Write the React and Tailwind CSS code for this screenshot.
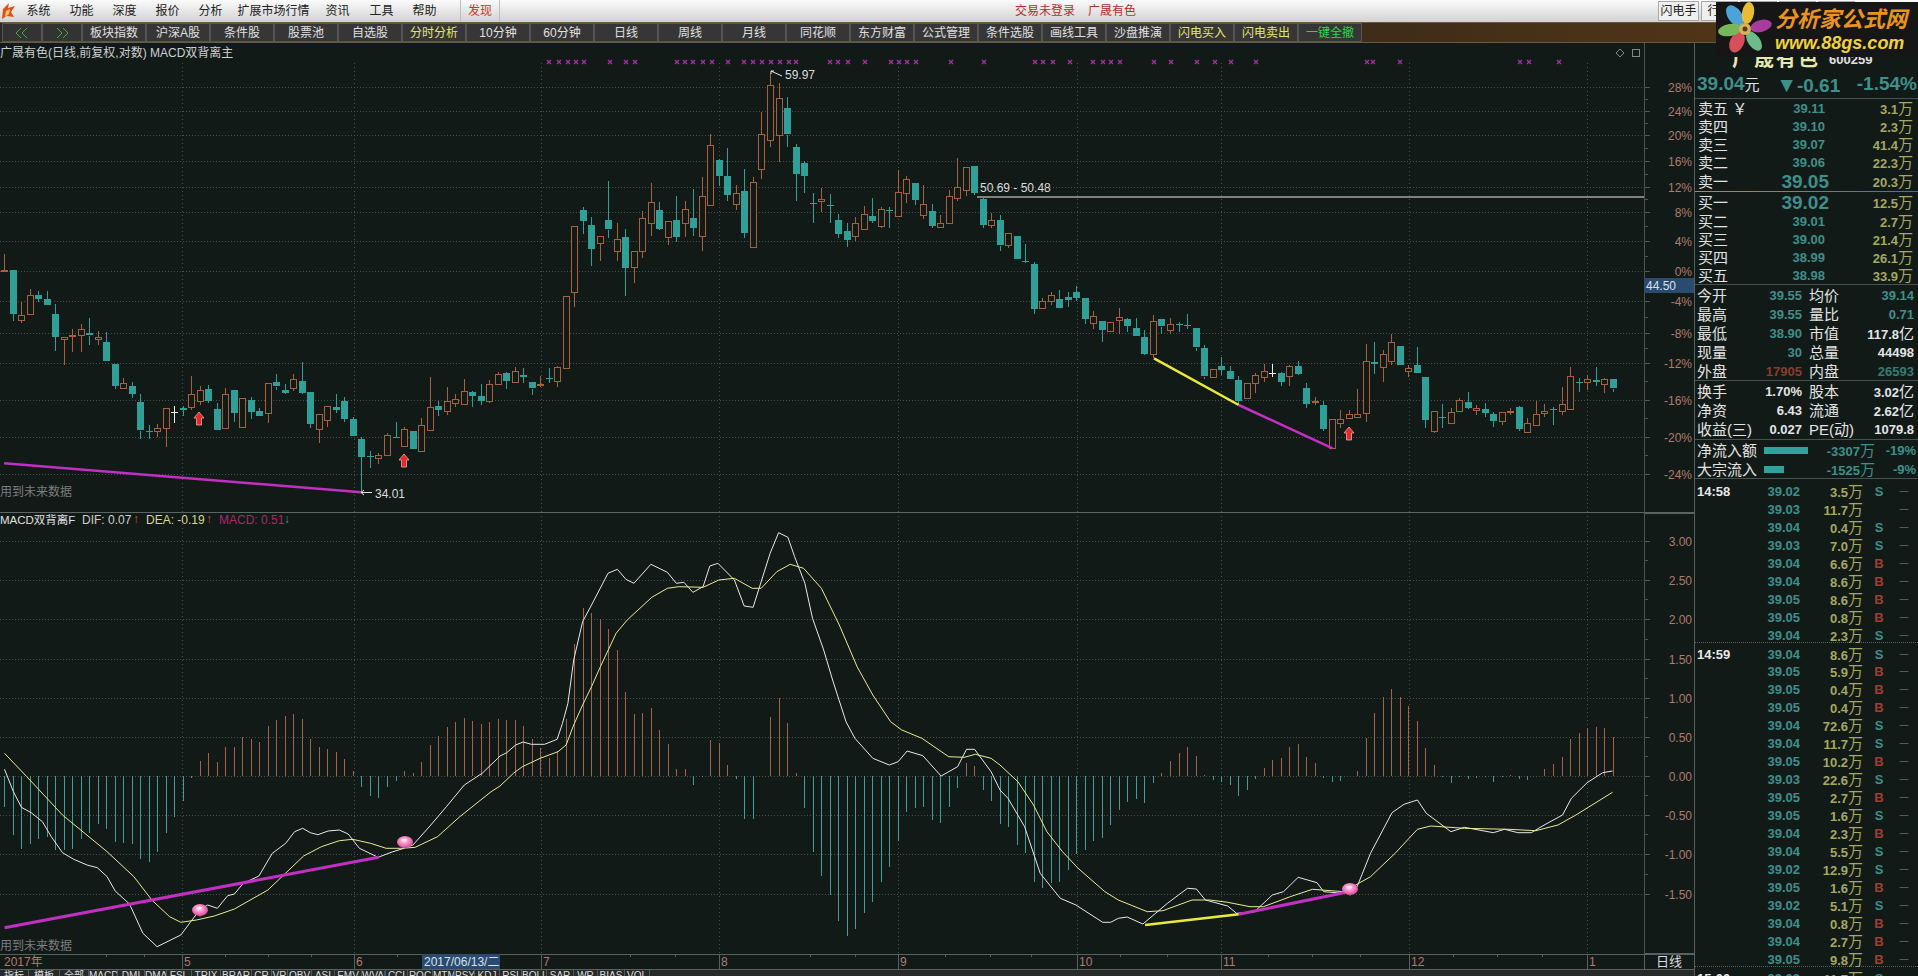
const BG = '#121a18';
const RED = '#a9603f';
const TEAL = '#2f9f98';

// candle data read off the chart: [kind, high, bodyTop, bodyBottom, low], kind 0 up, 1 down, 2 white doji
const candlesA = [
  [0,42,90,94,94],[1,90,90,222,242],[0,185,224,240,248],[0,148,166,224,224],[1,154,166,178,185],[1,153,178,195,195],[1,192,222,290,332],[0,290,290,295,376],[0,268,286,290,335],[0,252,268,286,335],
  [1,235,280,287,315],[0,272,290,297,316],[1,277,306,363,363],[1,372,372,438,448],[0,415,430,445,445],[1,425,438,462,475],[1,462,487,572,596],[1,556,573,575,598],[0,552,565,575,590],[0,505,505,565,622],
  [2,497,517,519,548],[1,497,503,509,528],[0,408,463,502,510],[0,437,451,485,495],[1,436,447,483,490],[1,490,508,572,572],[0,445,463,566,566],[1,450,450,518,545],[0,475,475,562,562],[1,472,480,515,538],
  [1,505,514,530,532],[0,430,430,520,548],[1,402,427,440,450],[1,433,451,459,463],[0,403,418,446,452],[1,367,424,460,462],[1,457,457,552,565],[0,523,523,569,608],[0,499,499,541,560],[1,463,502,511,518],
  [1,472,483,537,545],[1,532,538,588,588],[1,590,597,650,760],[1,634,648,650,684],[0,640,644,653,672],[0,578,586,646,646],[1,546,592,596,596],[0,560,568,620,620],[1,574,574,627,627],[0,533,556,635,635],
  [0,411,500,569,569],[1,484,498,510,528],[0,441,484,513,524],[0,463,478,490,500],[0,418,454,494,494],[1,452,456,468,500],[1,433,468,482,495],[0,420,433,483,490],[0,395,403,433,434],[1,395,399,423,446],
  [0,382,392,425,428],[1,384,404,410,428],[1,427,427,446,464],[0,407,431,435,442],[1,385,415,417,428],[0,378,382,425,442],[0,169,169,386,386],
];
const candlesB = [
  [0,528,528,727,770],[1,470,480,512,552],[1,502,525,597,647],[0,559,559,581,632],[1,393,511,539,565],[0,520,566,602,632],[1,538,561,653,738],[0,603,603,650,698],[0,484,504,604,625],[0,400,457,520,557],
  [1,457,480,537,541],[0,514,514,563,585],[1,438,510,561,575],[0,453,478,520,562],[1,417,504,533,557],[0,380,438,559,602],[0,253,286,467,467],[1,328,330,377,408],[1,295,378,434,452],[0,405,428,460,480],
  [1,358,423,548,563],[0,380,397,592,592],[0,185,253,358,386],[0,70,106,271,290],[0,100,145,255,337],[1,142,175,254,290],[1,282,292,372,452],[1,332,339,377,428],[1,430,459,461,518],[0,415,448,455,487],
  [1,432,466,469,518],[1,492,511,552,565],[1,520,544,570,592],[0,500,520,560,572],[0,467,492,536,536],[1,444,499,513,518],[0,472,478,530,534],[1,472,481,484,534],[0,360,427,500,500],[0,378,388,430,458],
  [1,400,400,450,466],[0,405,463,495,508],[1,462,484,528,534],[0,495,520,532,532],[0,420,438,518,518],[0,325,412,445,452],[0,352,352,420,438],[1,349,349,430,436],[1,440,447,525,534],[0,490,511,527,535],
  [1,495,511,587,603],[0,548,550,587,594],[1,558,558,627,627],[1,582,634,637,640],[1,636,642,776,792],
];
const candlesC = [
  [0,175,182,203,205],[0,155,165,182,195],[1,150,178,204,205],[1,155,170,179,200],[1,138,157,174,184],[1,174,174,237,252],[0,213,229,250,266],[1,243,243,270,305],[0,245,245,272,272],[0,205,232,242,282],
  [1,235,238,258,275],[1,235,265,290,290],[1,270,291,342,345],[0,225,243,342,355],[1,238,238,260,283],[0,235,253,272,282],[1,245,251,254,275],[1,223,256,258,268],[1,265,265,323,332],[1,315,325,410,418],
  [0,388,388,412,414],[1,350,378,389,405],[1,378,393,416,418],[1,408,420,482,495],[0,430,430,476,476],[0,400,405,428,460],[0,372,394,411,425],[2,372,399,401,410],[1,395,400,426,438],[0,375,379,408,438],
  [1,362,377,402,405],[1,430,445,492,505],[0,472,484,488,495],[1,482,496,568,572],[0,538,538,625,625],[0,510,536,547,565],[0,510,523,536,538],[0,448,521,530,530],[0,312,362,518,545],[1,305,366,372,402],
  [0,330,343,382,425],[0,283,305,362,375],[1,319,319,376,376],[0,375,385,393,410],[1,322,376,399,399],[1,412,412,540,565],[0,514,514,575,580],[1,492,531,534,565],[0,503,517,549,550],[0,475,481,514,516],
  [1,457,487,504,507],[0,495,503,510,525],[1,488,508,519,530],[1,515,521,543,560],[0,515,515,543,555],[0,505,514,516,525],[1,498,502,567,572],[0,535,550,578,580],[0,483,523,555,555],[0,492,514,521,530],
  [1,500,507,509,555],[0,440,493,513,526],[0,382,409,509,509],[1,415,427,430,456],[0,405,418,428,450],[1,380,419,425,438],[0,415,416,430,458],[1,418,418,446,456],
];
const candles = [
  ...candlesA.map((c) => [c[0], ...c.slice(1).map((z) => 240 + z / 3)]),
  ...candlesB.map((c) => [c[0], ...c.slice(1).map((z) => 50 + z / 3)]),
  ...candlesC.map((c) => [c[0], ...c.slice(1).map((z) => 240 + z / 3)]),
];

// macd histogram, px above or below the zero line
const hist = [
  -31,-59,-73,-68,-63,-61,-74,-74,-73,-63,-57,-48,-53,-66,-67,-68,-83,-86,-76,-57,-41,-25,-2,
  15,23,14,29,29,39,37,34,50,56,60,62,57,37,29,27,24,17,5,-11,-20,-22,-11,-5,
  5,3,14,31,40,49,54,58,55,52,54,57,56,56,50,37,28,18,25,57,132,168,163,157,147,126,84,62,63,68,46,32,7,7,
  -9,-1,36,33,11,-3,-43,-43,0,59,78,53,3,
  -32,-76,-100,-119,-145,-160,-153,-137,-126,-106,-91,-65,-36,-32,-31,-44,-47,-31,-12,13,10,
  -14,-25,-48,-51,-69,-77,-106,-112,-107,-106,-94,-78,-74,-65,-62,-49,-34,-26,-23,-27,-7,
  3,15,23,29,20,1,-4,-6,-9,-20,-14,-3,8,16,18,29,32,19,13,-2,-6,-5,0,5,38,
  63,79,87,79,70,55,28,11,-1,-7,-1,-3,-2,-1,-6,-1,1,-3,-4,0,7,12,19,37,43,48,49,48,39,
];

const pts = (list, x0, sx, y0) => list.map(([x, y]) => `${(x0 + x / sx).toFixed(1)},${(y0 + y / 3).toFixed(1)}`).join(' ');

const difLine = [
  pts([[10,148],[30,215],[48,262],[70,278],[95,305],[115,350],[140,398],[165,418],[195,435],[218,443],[240,470],[258,513],[290,552],[320,640],[352,680],[405,645],[430,600],[447,570],[465,555],[487,565],[510,527],[525,522],[545,490],[580,468],[610,400],[640,370],[660,335],[678,325],[695,338],[712,344],[735,333],[760,330],[780,342],[805,385],[847,412],[880,395],[905,385],[925,375],[945,345],[965,315],[1000,260],[1040,195],[1080,160],[1115,115]], 0, 2.24, 720),
  pts([[0,738],[15,728],[35,705],[52,696],[70,703],[100,703],[128,688],[140,640],[152,580],[165,450],[185,335],[205,285],[242,190],[263,178],[282,208],[300,220],[338,163],[375,187],[395,220],[412,217],[432,247],[455,230],[470,168],[488,160],[525,210],[547,288],[567,292],[605,130],[624,68],[645,82],[660,140],[683,220],[700,325],[725,420],[745,510],[775,635],[795,685],[835,745],[872,765],[892,755],[912,723],[947,737],[988,798],[1025,770],[1045,718],[1063,718],[1100,785]], 500, 2.24, 510),
  pts([[0,210],[18,235],[55,320],[90,460],[135,535],[170,555],[230,607],[248,607],[265,595],[285,591],[320,612],[375,550],[420,505],[440,507],[460,540],[510,558],[530,580],[570,575],[610,525],[635,515],[668,472],[710,488],[725,515],[770,520],[785,505],[800,500],[830,400],[878,278],[905,253],[935,240],[955,280],[1010,335],[1040,322],[1105,338],[1130,328],[1160,338],[1190,338],[1215,318],[1260,285],[1280,235],[1315,188],[1350,158],[1372,153]], 1000, 2.24, 720),
].join(' ');

const deaLine = [
  pts([[10,100],[60,170],[140,285],[240,395],[300,470],[340,540],[380,590],[405,607],[440,600],[480,588],[525,567],[600,510],[680,408],[720,380],[760,362],[790,358],[830,370],[865,385],[900,385],[930,382],[980,350],[1030,290],[1100,215]], 0, 2.24, 720),
  pts([[0,828],[30,790],[50,770],[90,745],[130,725],[148,705],[165,645],[185,585],[205,530],[225,470],[260,370],[285,330],[340,262],[375,235],[400,230],[455,232],[490,210],[525,205],[565,235],[585,235],[620,185],[650,163],[680,175],[720,235],[760,345],[800,470],[835,555],[875,635],[900,660],[945,685],[1005,740],[1040,742],[1065,733],[1100,745]], 500, 2.24, 510),
  pts([[0,135],[40,185],[75,255],[105,335],[140,395],[175,445],[235,515],[265,540],[330,575],[365,572],[430,540],[470,540],[510,547],[560,560],[590,560],[650,530],[700,508],[770,515],[830,470],[885,400],[935,328],[965,318],[1040,325],[1140,328],[1200,332],[1250,315],[1290,285],[1372,217]], 1000, 2.24, 720),
].join(' ');

const monthX = [182, 354, 541, 719, 898, 1077, 1221, 1409, 1587];
const upperGrid = [[87,'28%'],[111,'24%'],[135,'20%'],[161,'16%'],[187,'12%'],[212,'8%'],[241,'4%'],[271,'0%'],[301,'-4%'],[333,'-8%'],[363,'-12%'],[400,'-16%'],[437,'-20%'],[474,'-24%']];
const lowerGrid = [[541,'3.00'],[580,'2.50'],[619,'2.00'],[659,'1.50'],[698,'1.00'],[737,'0.50'],[776,'0.00'],[815,'-0.50'],[854,'-1.00'],[894,'-1.50']];
const crossX = [549,559,568,576,584,610,626,635,677,685,693,703,712,728,744,753,762,771,780,789,796,830,838,848,865,891,899,907,916,951,984,1035,1043,1053,1070,1093,1103,1111,1120,1154,1171,1197,1215,1231,1256,1367,1373,1400,1520,1529,1559];

const candleX = (i) => Math.round(4 + 8.511 * i) + 0.5;

const Candle = ({ c, i }) => {
  const [kind, high, top, bottom, low] = c;
  const x = candleX(i);
  const color = kind === 0 ? RED : kind === 1 ? TEAL : '#eeeeee';
  return (
    <g shapeRendering="crispEdges">
      <line x1={x} x2={x} y1={high} y2={top} stroke={color} />
      <line x1={x} x2={x} y1={bottom} y2={low} stroke={color} />
      {kind === 0 ? (
        <rect x={x - 3} y={Math.round(top) + 0.5} width={6} height={Math.max(1, Math.round(bottom - top))} fill={BG} stroke={color} />
      ) : (
        <rect x={x - 3.5} y={Math.round(top)} width={7} height={Math.max(1, Math.round(bottom - top))} fill={color} />
      )}
    </g>
  );
};

const UpArrow = ({ x, y }) => (
  <path transform={`translate(${x} ${y})`} d="M0,-7 L5,-1 L2.5,-1 L2.5,6 L-2.5,6 L-2.5,-1 L-5,-1 Z" fill="#e02b2b" stroke="#f0a79d" strokeWidth="0.8" />
);

const Gem = ({ x, y }) => (
  <g transform={`translate(${x} ${y})`}>
    <path d="M-6,1 L0,7 L6,1 Z" fill="#c9407f" />
    <ellipse rx="8" ry="6" fill="url(#gem)" />
    <ellipse cx="-1" cy="-2" rx="3" ry="1.5" fill="#fff0f8" opacity="0.7" />
  </g>
);

const Axis = ({ grid, y1, y2 }) => (
  <g>
    <line x1="1644" x2="1644" y1={y1} y2={y2} stroke="#4a5653" shapeRendering="crispEdges" />
    {grid.map(([y, label], i) => (
      <g key={label}>
        <line x1="1644" x2="1650" y1={y} y2={y} stroke="#4a5653" shapeRendering="crispEdges" />
        {i < grid.length - 1 && (
          <line x1="1644" x2="1648" y1={(y + grid[i + 1][0]) / 2} y2={(y + grid[i + 1][0]) / 2} stroke="#4a5653" shapeRendering="crispEdges" />
        )}
        <text x="1692" y={y + 2} textAnchor="end" dominantBaseline="middle" fontSize="12" fill="#b07a6c">{label}</text>
      </g>
    ))}
  </g>
);

const Grid = ({ grid, y1, y2 }) => (
  <g stroke="#46514e" shapeRendering="crispEdges">
    {grid.map(([y]) => (
      <line key={y} x1="0" x2="1644" y1={y + 0.5} y2={y + 0.5} strokeDasharray="1 2" />
    ))}
    {monthX.map((x) => (
      <line key={x} x1={x + 0.5} x2={x + 0.5} y1={y1} y2={y2} strokeDasharray="1 3" />
    ))}
  </g>
);

const UpperChart = () => (
  <svg width="1694" height="469" viewBox="0 43 1694 469">
    <Grid grid={upperGrid} y1={63} y2={512} />
    <text x="0" y="54" dominantBaseline="middle" fontSize="12" fill="#cfcfcf">广晟有色(日线,前复权,对数) MACD双背离主</text>
    <g fill="none" stroke="#7d8a86">
      <path d="M1620,49 L1624,53 L1620,57 L1616,53 Z" />
      <rect x="1632.5" y="49.5" width="7" height="7" />
    </g>
    <g stroke="#a32ea3" strokeWidth="1.4">
      {crossX.map((x) => (
        <path key={x} d={`M${x - 2},60 L${x + 2},64 M${x + 2},60 L${x - 2},64`} />
      ))}
    </g>
    <line x1="977" x2="1644" y1="197" y2="197" stroke="#a6a69a" strokeWidth="1.6" />
    {candles.map((c, i) => <Candle key={i} c={c} i={i} />)}
    <polyline points={pts([[10,670],[885,757]], 0, 2.45, 240)} stroke="#c22fc2" strokeWidth="2.5" fill="none" />
    <polyline points={pts([[345,355],[535,495]], 1000, 2.24, 240)} stroke="#eaea3c" strokeWidth="2.5" fill="none" />
    <polyline points={pts([[535,495],[745,625]], 1000, 2.24, 240)} stroke="#c22fc2" strokeWidth="2.5" fill="none" />
    <UpArrow x={199} y={419} />
    <UpArrow x={404} y={461} />
    <UpArrow x={1349} y={434} />
    <g stroke="#e6e6e6" fill="none">
      <path d="M771,74 L771,71 L774,71 M771,71 L782,76" />
      <path d="M361,492.5 L372,492.5 M361,492.5 L364,490 M361,492.5 L364,495" />
    </g>
    <g fontSize="12" fill="#dcdcdc" dominantBaseline="middle">
      <text x="785" y="76">59.97</text>
      <text x="375" y="495">34.01</text>
      <text x="980" y="189">50.69 - 50.48</text>
    </g>
    <text x="0" y="493" dominantBaseline="middle" fontSize="12" fill="#7d7d7d">用到未来数据</text>
    <Axis grid={upperGrid} y1={43} y2={512} />
    <rect x="1644" y="278" width="50" height="15" fill="#2a4a70" />
    <text x="1646" y="286.5" dominantBaseline="middle" fontSize="12" fill="#d8e2ea">44.50</text>
  </svg>
);

const LowerChart = () => (
  <svg width="1694" height="441" viewBox="0 513 1694 441">
    <defs>
      <radialGradient id="gem" cx="45%" cy="40%" r="60%">
        <stop offset="0%" stopColor="#fbd4ea" />
        <stop offset="60%" stopColor="#f07cbc" />
        <stop offset="100%" stopColor="#d64596" />
      </radialGradient>
    </defs>
    <Grid grid={lowerGrid} y1={516} y2={954} />
    <g fontSize="12" dominantBaseline="middle">
      <text x="0" y="521" fill="#e0e0e0" fontSize="11.5">MACD双背离F</text>
      <text x="82" y="521" fill="#cfcfcf">DIF: 0.07</text>
      <text x="133" y="520" fill="#b5603f">↑</text>
      <text x="146" y="521" fill="#d9d98a">DEA: -0.19</text>
      <text x="206" y="520" fill="#b5603f">↑</text>
      <text x="219" y="521" fill="#a82a66">MACD: 0.51</text>
      <text x="284" y="520" fill={TEAL}>↓</text>
    </g>
    <g shapeRendering="crispEdges">
      {hist.map((h, i) => (
        <line key={i} x1={candleX(i)} x2={candleX(i)} y1={776} y2={776 - h} stroke={h > 0 ? '#a8604a' : '#3f9d97'} />
      ))}
    </g>
    <polyline points={difLine} fill="none" stroke="#e8e8e8" />
    <polyline points={deaLine} fill="none" stroke="#eaea96" />
    <polyline points={pts([[10,623],[848,412]], 0, 2.24, 720)} stroke="#c22fc2" strokeWidth="3" fill="none" />
    <polyline points={pts([[325,615],[535,583]], 1000, 2.24, 720)} stroke="#eaea3c" strokeWidth="2.5" fill="none" />
    <polyline points={pts([[535,583],[770,518]], 1000, 2.24, 720)} stroke="#c22fc2" strokeWidth="3" fill="none" />
    <Gem x={200} y={910} />
    <Gem x={405} y={842} />
    <Gem x={1350} y={889} />
    <text x="0" y="947" dominantBaseline="middle" fontSize="12" fill="#7d7d7d">用到未来数据</text>
    <rect x="1644" y="513.5" width="50" height="440" fill="none" stroke="#56625f" shapeRendering="crispEdges" />
    <Axis grid={lowerGrid} y1={513} y2={954} />
  </svg>
);

const dateLabels = [[184,'5'],[356,'6'],[543,'7'],[721,'8'],[900,'9'],[1079,'10'],[1223,'11'],[1411,'12'],[1589,'1']];
const dateTicks = [106,144,225,268,311,397,460,630,675,810,855,945,990,1031,1120,1167,1268,1312,1360,1453,1497,1542];

const DateAxis = () => (
  <svg width="1694" height="16" viewBox="0 954 1694 16">
    <line x1="0" x2="1694" y1="954.5" y2="954.5" stroke="#56625f" />
    <text x="4" y="963" dominantBaseline="middle" fontSize="12" fill="#b07a6c">2017年</text>
    {dateTicks.map((x) => (
      <line key={x} x1={x + 0.5} x2={x + 0.5} y1="954" y2="957" stroke="#56625f" />
    ))}
    {dateLabels.map(([x, label]) => (
      <g key={x}>
        <line x1={x - 2 + 0.5} x2={x - 2 + 0.5} y1="954" y2="970" stroke="#56625f" />
        <text x={x} y="963" dominantBaseline="middle" fontSize="12" fill="#b07a6c">{label}</text>
      </g>
    ))}
    <rect x="422" y="954" width="78" height="16" fill="#2a4a70" />
    <text x="424" y="963" dominantBaseline="middle" fontSize="12" fill="#d8e2ea">2017/06/13/二</text>
    <line x1="1644.5" x2="1644.5" y1="954" y2="970" stroke="#56625f" />
    <text x="1669" y="963" textAnchor="middle" dominantBaseline="middle" fontSize="13" fill="#dcdcdc">日线</text>
    <line x1="0" x2="1694" y1="969.5" y2="969.5" stroke="#56625f" />
  </svg>
);

const menuItems = [['系统','w-[43px]'],['功能','w-[43px]'],['深度','w-[43px]'],['报价','w-[43px]'],['分析','w-[43px]'],['扩展市场行情','w-[83px]'],['资讯','w-[45px]'],['工具','w-[43px]'],['帮助','w-[43px]']];
const toolItems = [
  ['板块指数'],['沪深A股'],['条件股'],['股票池'],['自选股'],['分时分析','y'],['10分钟'],['60分钟'],['日线'],
  ['周线'],['月线'],['同花顺'],['东方财富'],['公式管理'],['条件选股'],['画线工具'],['沙盘推演'],['闪电买入','y'],['闪电卖出','y'],['一键全撤','g'],
];
const statusTabs = [
  ['指标','w-[29px]'],['模板','w-[31px]'],['全部','w-[29px]'],['MACD','w-[29px]'],['DMI','w-[27px]'],['DMA','w-[22px]'],['FSL','w-[25px]'],['TRIX','w-[29px]'],['BRAR','w-[31px]'],['CR','w-[20px]'],['VR','w-[16px]'],['OBV','w-[24px]'],['ASI','w-[23px]'],
  ['EMV','w-[27px]'],['WVAD','w-[24px]'],['CCI','w-[22px]'],['ROC','w-[25px]'],['MTM','w-[22px]'],['PSY','w-[20px]'],['KDJ','w-[25px]'],['RSI','w-[22px]'],['BOLL','w-[25px]'],['SAR','w-[27px]'],['WR','w-[24px]'],['BIAS','w-[27px]'],['VOL','w-[25px]'],
];

const sells = [['卖五 ￥','39.11','3.1'],['卖四','39.10','2.3'],['卖三','39.07','41.4'],['卖二','39.06','22.3']];
const buys = [['买二','39.01','2.7'],['买三','39.00','21.4'],['买四','38.99','26.1'],['买五','38.98','33.9']];
const stats = [
  ['今开','39.55','text-[#3f8f8a]','均价','39.14','text-[#3f8f8a]'],
  ['最高','39.55','text-[#3f8f8a]','量比','0.71','text-[#3f8f8a]'],
  ['最低','38.90','text-[#3f8f8a]','市值','117.8','text-[#e4e4e4]','亿'],
  ['现量','30','text-[#3f8f8a]','总量','44498','text-[#e4e4e4]'],
  ['外盘','17905','text-[#8c3b2a]','内盘','26593','text-[#3a7a72]'],
];
const stats2 = [
  ['换手','1.70%','股本','3.02','亿'],
  ['净资','6.43','流通','2.62','亿'],
  ['收益(三)','0.027','PE(动)','1079.8',''],
];
const ticks = [
  ['14:58','39.02','3.5','S'],['','39.03','11.7',''],['','39.04','0.4','S'],['','39.03','7.0','S'],['','39.04','6.6','B'],['','39.04','8.6','B'],['','39.05','8.6','B'],['','39.05','0.8','B'],['','39.04','2.3','S'],
  ['14:59','39.04','8.6','S'],['','39.05','5.9','B'],['','39.05','0.4','B'],['','39.05','0.4','B'],['','39.04','72.6','S'],['','39.04','11.7','S'],['','39.05','10.2','B'],['','39.03','22.6','S'],['','39.05','2.7','B'],
  ['','39.05','1.6','S'],['','39.04','2.3','B'],['','39.04','5.5','S'],['','39.02','12.9','S'],['','39.05','1.6','B'],['','39.02','5.1','S'],['','39.04','0.8','B'],['','39.04','2.7','B'],['','39.05','9.8','B'],
  ['15:00','39.03','11.7','S'],
];

const OrderRow = ({ label, price, vol, big, h }) => (
  <div className={`grid grid-cols-[52px_75px_88px] items-center pl-[3px] leading-none ${h}`}>
    <span className="text-[15px] text-[#e2e2e2] whitespace-nowrap">{label}</span>
    <span className={big ? 'text-right text-[19px] font-bold text-[#3f8f8a] mr-[-4px]' : 'text-right text-[13px] font-bold text-[#3f8f8a]'}>{price}</span>
    <span className="text-right text-[13px] font-bold text-[#a5a85f]">{vol}<span className="text-[15px] font-normal">万</span></span>
  </div>
);

const Chevrons = ({ flip }) => (
  <svg width="16" height="12" viewBox="0 0 16 12" className={flip ? 'rotate-180' : ''}>
    <path d="M7,1 L2,6 L7,11 M13,1 L8,6 L13,11" fill="none" stroke="#3fae3f" />
  </svg>
);

const Logo = () => (
  <div className="absolute left-[1716px] top-[2px] flex h-[55px] w-[202px] items-center bg-[#161616]">
    <svg width="58" height="55" viewBox="-29 -27 58 55" className="shrink-0">
      <ellipse cx="-10" cy="-13" rx="7" ry="12" transform="rotate(-35 -10 -13)" fill="#4ba3d8" />
      <ellipse cx="3" cy="-16" rx="6" ry="11" transform="rotate(10 3 -16)" fill="#e9bc35" />
      <ellipse cx="16" cy="-3" rx="6" ry="11" transform="rotate(75 16 -3)" fill="#a83c9e" />
      <ellipse cx="9" cy="12" rx="6" ry="11" transform="rotate(-35 9 12)" fill="#6dbb86" />
      <ellipse cx="-8" cy="13" rx="7" ry="11" transform="rotate(25 -8 13)" fill="#d5505c" />
      <ellipse cx="-15" cy="1" rx="6" ry="12" transform="rotate(80 -15 1)" fill="#79b65a" />
      <circle r="6" fill="#d8b25a" />
      <circle r="2.5" fill="#5a3a1a" />
    </svg>
    <div className="ml-[1px] flex flex-col">
      <span className="text-[22px] font-bold italic leading-[26px] text-[#e8941e]">分析家公式网</span>
      <span className="text-[18px] font-bold italic leading-[20px] text-[#efd23a]">www.88gs.com</span>
    </div>
  </div>
);

export default function App() {
  return (
    <div className="relative flex h-[976px] w-[1918px] flex-col overflow-hidden bg-[#121a18] font-['Liberation_Sans','Noto_Sans_CJK_SC',sans-serif]">
      {/* title bar */}
      <div className="flex h-[22px] items-center bg-gradient-to-b from-[#fbfbfb] to-[#d2d2d2] text-[12px] text-[#222]">
        <svg width="17" height="20" viewBox="0 0 17 20" className="shrink-0">
          <path d="M2,18 L3,8 L9,2 L8,7 L15,5 L11,11 L14,16 L7,15 Z" fill="#d8541c" />
          <path d="M5,16 L6,10 L10,8 L9,13 Z" fill="#f6c454" />
        </svg>
        {menuItems.map(([label, w]) => (
          <span key={label} className={`${w} text-center`}>{label}</span>
        ))}
        <div className="ml-[14px] flex h-full w-[40px] items-center justify-center border-x border-[#bdbdbd] text-[#c0392b]">发现</div>
        <span className="ml-[515px] text-[#b32d2d]">交易未登录</span>
        <span className="ml-[13px] text-[#b32d2d]">广晟有色</span>
        <div className="ml-[522px] flex gap-[2px]">
          <span className="flex h-[20px] w-[41px] items-center justify-center border border-[#a8a8a8] bg-[#efefef]">闪电手</span>
          {['行情', '资讯', '交易', '网站'].map((b) => (
            <span key={b} className="flex h-[20px] w-[37px] items-center justify-center border border-[#a8a8a8] bg-[#efefef]">{b}</span>
          ))}
        </div>
      </div>

      {/* toolbar */}
      <div className="flex h-[21px] items-stretch border-y border-[#6b5a3e] bg-gradient-to-r from-[#2a2a26] via-[#2b2218] to-[#5a3a16] pl-[2px] text-[12px]">
        <span className="flex w-[40px] items-center justify-center border border-[#555] bg-[#333]"><Chevrons /></span>
        <span className="flex w-[40px] items-center justify-center border border-[#555] bg-[#333]"><Chevrons flip /></span>
        {toolItems.map(([label, tone]) => (
          <span
            key={label}
            className={`flex w-[64px] items-center justify-center border border-[#555] bg-[#363636] ${tone === 'y' ? 'text-[#e6e66a]' : tone === 'g' ? 'text-[#2fd84a]' : 'text-[#e0e0e0]'}`}
          >
            {label}
          </span>
        ))}
      </div>

      <div className="flex flex-1 overflow-hidden">
        {/* chart column */}
        <div className="flex w-[1694px] shrink-0 flex-col">
          <UpperChart />
          <div className="h-px bg-[#5a6664]" />
          <LowerChart />
          <DateAxis />
          <div className="flex h-[6px] overflow-hidden bg-[#262b2a] text-[10px] leading-[12px] text-[#dcdcdc]">
            {statusTabs.map(([t, w]) => (
              <span key={t} className={`${w} shrink-0 overflow-hidden whitespace-nowrap border-r border-[#555] text-center`}>{t}</span>
            ))}
          </div>
        </div>

        {/* quote panel */}
        <div className="w-[224px] border-l border-[#56625f]">
          <div className="flex h-[28px] items-center pl-[37px]">
            <span className="mt-[3px] text-[20px] font-bold tracking-[2px] text-[#e8e8b0]">广晟有色</span>
            <span className="ml-[9px] mt-[6px] text-[13px] font-bold text-[#e0e0e0]">600259</span>
          </div>
          <div className="flex h-[28px] items-center justify-between border-b border-[#46524f] pl-[2px] pr-[1px] font-bold text-[#3f8f8a]">
            <span className="text-[19px]">39.04<span className="text-[15px] font-normal text-[#e2e2e2]">元</span></span>
            <span className="text-[19px]"><span className="text-[21px]">▼</span>-0.61</span>
            <span className="text-[19px]">-1.54%</span>
          </div>
          {sells.map(([l, p, v]) => <OrderRow key={l} label={l} price={p} vol={v} h="h-[18px]" />)}
          <OrderRow label="卖一" price="39.05" vol="20.3" big h="h-[20px]" />
          <div className="h-px bg-gradient-to-r from-[#a58a5a] to-[#3f6f9f]" />
          <OrderRow label="买一" price="39.02" vol="12.5" big h="h-[20px]" />
          {buys.map(([l, p, v]) => <OrderRow key={l} label={l} price={p} vol={v} h="h-[18px]" />)}
          <div className="h-px bg-[#46524f]" />
          <div className="border-b border-[#46524f]">
            {stats.map(([l, v, c, l2, v2, c2, unit]) => (
              <div key={l} className="grid h-[19px] grid-cols-[40px_65px_7px_32px_73px] items-center pl-[2px] pt-[2px] text-[13px] font-bold leading-none">
                <span className="text-[15px] font-normal text-[#e2e2e2]">{l}</span>
                <span className={`text-right ${c}`}>{v}</span>
                <span />
                <span className="text-[15px] font-normal text-[#e2e2e2]">{l2}</span>
                <span className={`text-right ${c2}`}>{v2}{unit && <span className="text-[15px] font-normal">{unit}</span>}</span>
              </div>
            ))}
          </div>
          <div className="h-[59px] border-b border-[#46524f]">
            {stats2.map(([l, v, l2, v2, unit]) => (
              <div key={l} className="grid h-[19px] grid-cols-[40px_65px_7px_32px_73px] items-center pl-[2px] pt-[2px] text-[13px] font-bold leading-none text-[#e4e4e4]">
                <span className="whitespace-nowrap text-[15px] font-normal">{l}</span>
                <span className="text-right">{v}</span>
                <span />
                <span className="whitespace-nowrap text-[15px] font-normal">{l2}</span>
                <span className="text-right">{v2}{unit && <span className="text-[15px] font-normal">{unit}</span>}</span>
              </div>
            ))}
          </div>
          <div className="border-b border-[#46524f]">
            <div className="grid h-[19px] grid-cols-[67px_50px_61px_41px] items-center pl-[2px] pt-[2px] text-[13px] font-bold leading-none text-[#3f8f8a]">
              <span className="whitespace-nowrap text-[15px] font-normal text-[#e2e2e2]">净流入额</span>
              <span className="h-[7px] w-[44px] bg-[#2fa39b]" />
              <span className="text-right">-3307<span className="text-[15px] font-normal">万</span></span>
              <span className="text-right">-19%</span>
            </div>
            <div className="grid h-[19px] grid-cols-[67px_50px_61px_41px] items-center pl-[2px] pt-[2px] text-[13px] font-bold leading-none text-[#3f8f8a]">
              <span className="whitespace-nowrap text-[15px] font-normal text-[#e2e2e2]">大宗流入</span>
              <span className="h-[7px] w-[20px] bg-[#2fa39b]" />
              <span className="text-right">-1525<span className="text-[15px] font-normal">万</span></span>
              <span className="text-right">-9%</span>
            </div>
          </div>
          <div className="pt-px">
            {ticks.map(([time, price, vol, side], i) => (
              <div key={i} className={`grid h-[18px] grid-cols-[50px_53px_63px_32px_18px] items-center pl-[2px] pt-[4px] text-[13px] font-bold leading-none ${time && i > 0 ? 'border-t border-dotted border-[#56625f]' : ''}`}>
                <span className="text-[#e8e8e8]">{time}</span>
                <span className="text-right text-[#3f8f8a]">{price}</span>
                <span className="text-right text-[#a5a85f]">{vol}<span className="text-[15px] font-normal">万</span></span>
                <span className={`text-center ${side === 'B' ? 'text-[#9a4030]' : 'text-[#3f8f8a]'}`}>{side}</span>
                <span className="text-center text-[9px] font-normal text-[#8a8a8a]">—</span>
              </div>
            ))}
          </div>
        </div>
      </div>

      <Logo />
    </div>
  );
}
